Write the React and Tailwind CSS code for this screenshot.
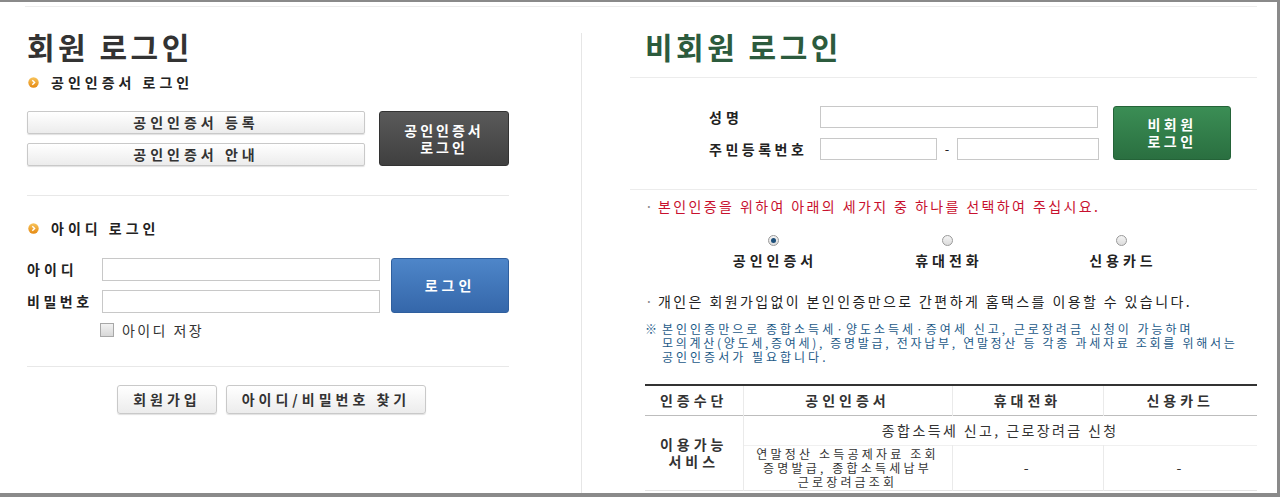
import React from "react";

const Bullet = () => (
  <svg width="11" height="11" viewBox="0 0 11 11" className="shrink-0">
    <defs>
      <linearGradient id="bg" x1="0" y1="0" x2="0" y2="1">
        <stop offset="0" stopColor="#f8c35a" />
        <stop offset="1" stopColor="#e58a12" />
      </linearGradient>
    </defs>
    <circle cx="5.5" cy="5.5" r="5.2" fill="url(#bg)" />
    <path d="M4.3 3.2 L6.6 5.5 L4.3 7.8" stroke="#fff" strokeWidth="1.4" fill="none" />
  </svg>
);

const Radio = ({ checked }) => (
  <span className="flex h-[11px] w-[11px] items-center justify-center rounded-full border border-[#9a9a9a] bg-linear-to-b from-[#f4f4f4] to-[#dcdcdc]">
    {checked && <span className="h-[5px] w-[5px] rounded-full bg-[#1d4f7a]" />}
  </span>
);

const SectionHead = ({ children, className = "" }) => (
  <div className={`flex h-[18px] items-center gap-[12px] pl-[1px] ${className}`}>
    <Bullet />
    <span className="text-[14px] font-bold tracking-[4px] text-[#222]">{children}</span>
  </div>
);

const LightBtn = ({ children, className = "" }) => (
  <button className={`flex items-center justify-center rounded-[2px] border border-[#c9c9c9] bg-linear-to-b from-white to-[#ececec] text-[14px] font-bold tracking-[4px] text-[#333] shadow-[0_1px_1px_rgba(0,0,0,0.12)] ${className}`}>
    {children}
  </button>
);

const Field = ({ className = "" }) => (
  <input className={`border border-[#c8c8c8] bg-white outline-none ${className}`} />
);

export default function App() {
  return (
    <div className="h-[497px] w-[1280px] overflow-hidden border-t-2 border-r-[3px] border-b-4 border-[#8a8a8a] bg-white font-['Noto_Sans_CJK_KR','Noto_Sans',sans-serif] text-[#222]">
      <div className="ml-[25px] mr-[20px] mt-[4px] h-px bg-[#ededed]" />

      <div className="flex">
        {/* 회원 로그인 */}
        <div className="w-[581px] pl-[27px]">
          <div className="w-[482px]">
            <h1 className="mt-[21px] h-[36px] text-[30px] font-bold leading-[36px] tracking-[3.5px] text-[#333]">회원 로그인</h1>

            <SectionHead className="mt-[9px]">공인인증서 로그인</SectionHead>

            <div className="mt-[20px] flex items-start">
              <div className="flex w-[338px] flex-col gap-[9px]">
                <LightBtn className="h-[23px] w-[338px]">공인인증서 등록</LightBtn>
                <LightBtn className="h-[23px] w-[338px]">공인인증서 안내</LightBtn>
              </div>
              <button className="ml-[14px] flex h-[55px] w-[130px] flex-col items-center justify-center rounded-[3px] border border-[#333] bg-linear-to-b from-[#5a5a5a] to-[#3f3f3f] text-[14px] font-bold leading-[17px] tracking-[3px] text-white">
                <span>공인인증서</span>
                <span>로그인</span>
              </button>
            </div>

            <div className="mt-[29px] h-px bg-[#e8e8e8]" />

            <SectionHead className="mt-[23px]">아이디 로그인</SectionHead>

            <div className="mt-[21px] flex items-start">
              <div className="flex flex-col gap-[9px]">
                <div className="flex items-center">
                  <span className="w-[75px] text-[14px] font-bold tracking-[4px]">아이디</span>
                  <Field className="h-[23px] w-[278px]" />
                </div>
                <div className="flex items-center">
                  <span className="w-[75px] text-[14px] font-bold tracking-[3.5px]">비밀번호</span>
                  <Field className="h-[23px] w-[278px]" />
                </div>
              </div>
              <button className="ml-[11px] flex h-[55px] w-[118px] items-center justify-center rounded-[3px] border border-[#2f5f9e] bg-linear-to-b from-[#4e86c9] to-[#3567aa] text-[14px] font-bold tracking-[4px] text-white">
                로그인
              </button>
            </div>

            <label className="ml-[73px] mt-[9px] flex h-[16px] items-center gap-[8px]">
              <span className="h-[14px] w-[14px] border border-[#a8a8a8] bg-linear-to-b from-[#f2f2f2] to-[#d8d8d8]" />
              <span className="text-[14px] tracking-[2.4px] text-[#333]">아이디 저장</span>
            </label>

            <div className="mt-[28px] h-px bg-[#e8e8e8]" />

            <div className="ml-[90px] mt-[18px] flex gap-[9px]">
              <LightBtn className="h-[29px] w-[100px] rounded-[3px] border-[#bdbdbd]">회원가입</LightBtn>
              <LightBtn className="h-[29px] w-[200px] rounded-[3px] border-[#bdbdbd]">아이디/비밀번호 찾기</LightBtn>
            </div>
          </div>
        </div>

        <div className="mt-[26px] h-[470px] w-px bg-[#e6e6e6]" />

        {/* 비회원 로그인 */}
        <div className="w-[695px] pl-[48px] pr-[20px]">
          <h1 className="ml-[15px] mt-[21px] h-[36px] text-[30px] font-bold leading-[36px] tracking-[3.5px] text-[#2c5b3d]">비회원 로그인</h1>

          <div className="mt-[13px] h-px bg-[#ececec]" />

          <div className="ml-[79px] mt-[28px] flex items-start">
            <div className="flex flex-col gap-[10px]">
              <div className="flex items-center">
                <span className="w-[111px] text-[14px] font-bold tracking-[4px]">성명</span>
                <Field className="h-[22px] w-[278px]" />
              </div>
              <div className="flex items-center">
                <span className="w-[111px] text-[14px] font-bold tracking-[3.5px]">주민등록번호</span>
                <Field className="h-[22px] w-[117px]" />
                <span className="w-[20px] text-center text-[13px]">-</span>
                <Field className="h-[22px] w-[142px]" />
              </div>
            </div>
            <button className="ml-[14px] flex h-[54px] w-[118px] flex-col items-center justify-center rounded-[3px] border border-[#246338] bg-linear-to-b from-[#3b8e55] to-[#2a6f40] text-[14px] font-bold leading-[17px] tracking-[3.5px] text-white">
              <span>비회원</span>
              <span>로그인</span>
            </button>
          </div>

          <div className="mt-[29px] h-px bg-[#ececec]" />

          <p className="ml-[15px] mt-[7px] flex h-[18px] items-center text-[14px] tracking-[2.4px] text-[#c8102e]">
            <span className="w-[13px] text-[#888]">·</span>
            본인인증을 위하여 아래의 세가지 중 하나를 선택하여 주십시요.
          </p>

          <div className="ml-[56px] mt-[20px] flex">
            {[
              ["공인인증서", true],
              ["휴대전화", false],
              ["신용카드", false],
            ].map(([label, on]) => (
              <div key={label} className="flex w-[174px] flex-col items-center">
                <Radio checked={on} />
                <span className="mt-[5px] h-[18px] pl-[4px] text-[14px] font-bold leading-[18px] tracking-[4px] text-[#222]">{label}</span>
              </div>
            ))}
          </div>

          <p className="ml-[15px] mt-[23px] flex h-[18px] items-center text-[14px] tracking-[2.4px] text-[#222]">
            <span className="w-[13px] text-[#888]">·</span>
            개인은 회원가입없이 본인인증만으로 간편하게 홈택스를 이용할 수 있습니다.
          </p>

          <div className="ml-[15px] mt-[12px] flex text-[12px] leading-[14px] tracking-[3px] text-[#1d5a88]">
            <span className="w-[17px] shrink-0 tracking-normal">※</span>
            <div>
              <p>본인인증만으로 종합소득세·양도소득세·증여세 신고, 근로장려금 신청이 가능하며</p>
              <p className="tracking-[2.7px]">모의계산(양도세,증여세), 증명발급, 전자납부, 연말정산 등 각종 과세자료 조회를 위해서는</p>
              <p>공인인증서가 필요합니다.</p>
            </div>
          </div>

          <table className="ml-[15px] mt-[20px] w-[612px] border-collapse border-t-2 border-[#333] text-center text-[14px] text-[#333]">
            <colgroup>
              <col className="w-[98px]" />
              <col className="w-[209px]" />
              <col className="w-[151px]" />
              <col className="w-[154px]" />
            </colgroup>
            <thead>
              <tr className="h-[30px] border-b border-[#bdbdbd] tracking-[4px]">
                <th className="font-bold">인증수단</th>
                <th className="border-l border-[#eaeaea] font-bold">공인인증서</th>
                <th className="border-l border-[#eaeaea] font-bold">휴대전화</th>
                <th className="border-l border-[#eaeaea] font-bold">신용카드</th>
              </tr>
            </thead>
            <tbody className="tracking-[2.4px]">
              <tr className="h-[30px] border-b border-[#f0f0f0]">
                <td rowSpan={2} className="font-bold leading-[17px] tracking-[4px]">
                  이용가능
                  <br />
                  서비스
                </td>
                <td colSpan={3} className="border-l border-[#eaeaea]">종합소득세 신고, 근로장려금 신청</td>
              </tr>
              <tr className="h-[45px] border-b border-[#e4e4e4]">
                <td className="border-l border-[#eaeaea] text-[12px] leading-[14px] tracking-[3.2px]">
                  연말정산 소득공제자료 조회
                  <br />
                  증명발급, 종합소득세납부
                  <br />
                  근로장려금조회
                </td>
                <td className="border-l border-[#eaeaea]">-</td>
                <td className="border-l border-[#eaeaea]">-</td>
              </tr>
            </tbody>
          </table>
        </div>
      </div>
    </div>
  );
}
